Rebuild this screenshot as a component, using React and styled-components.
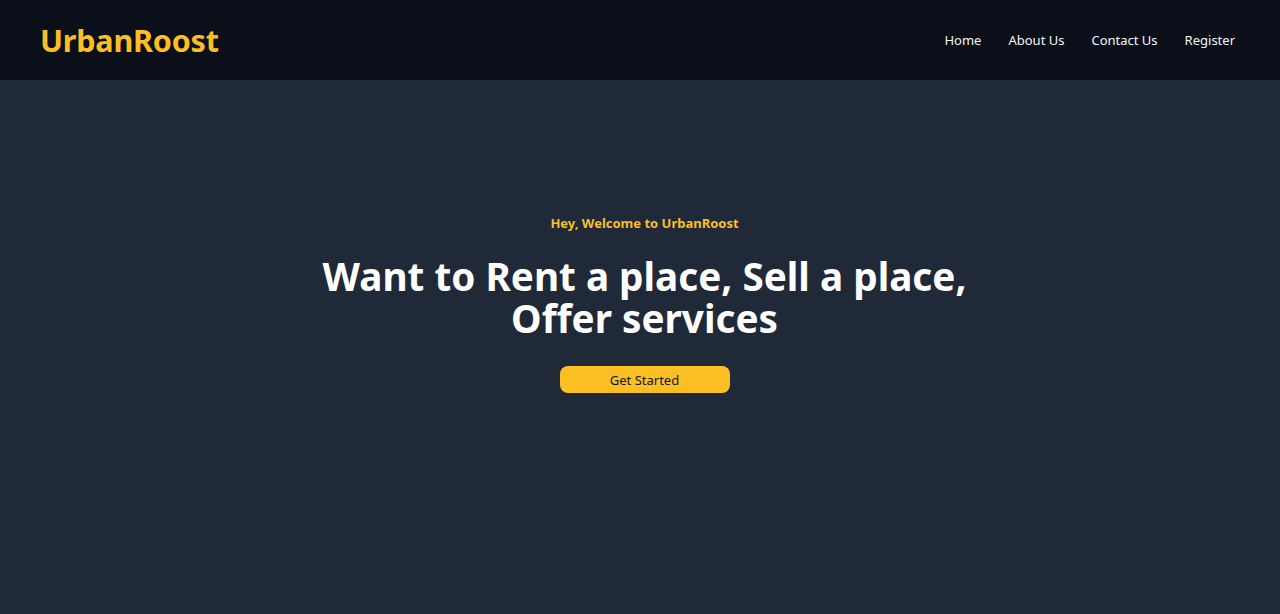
import React from "react";
import styled, { createGlobalStyle } from "styled-components";

const GlobalStyle = createGlobalStyle`
  html, body {
    margin: 0;
    padding: 0;
    background: #1f2937;
    font-family: "Noto Sans", "Open Sans", sans-serif;
  }
  * {
    box-sizing: border-box;
  }
`;

const Page = styled.div`
  min-height: 614px;
  display: flex;
  flex-direction: column;
  background: #1f2937;
`;

const Navbar = styled.nav`
  height: 80px;
  display: flex;
  align-items: center;
  justify-content: space-between;
  padding: 0 45px 0 40px;
  background: #0b0f19;
`;

const Logo = styled.div`
  color: #fbbf24;
  font-size: 30.5px;
  font-weight: 700;
  letter-spacing: -0.2px;
`;

const NavLinks = styled.ul`
  display: flex;
  gap: 27px;
  list-style: none;
  margin: 0;
  padding: 0;
`;

const NavLink = styled.li`
  color: #f3f4f6;
  font-size: 13px;
  cursor: pointer;
  margin-bottom: 1px;
`;

const Hero = styled.section`
  flex: 1;
  display: flex;
  flex-direction: column;
  align-items: center;
  padding: 134px 0 0 9px;
  text-align: center;
`;

const Greeting = styled.p`
  margin: 0;
  color: #fbbf24;
  font-size: 13px;
  font-weight: 700;
`;

const Heading = styled.h1`
  margin: 23px 0 0;
  color: #ffffff;
  font-size: 38.7px;
  font-weight: 700;
  line-height: 42px;
`;

const CtaButton = styled.button`
  margin-top: 27px;
  width: 170px;
  height: 27px;
  border: none;
  border-radius: 8px;
  background: #fbbf24;
  color: #111827;
  font-family: inherit;
  font-size: 13px;
  cursor: pointer;
`;

export default function App() {
  const links = ["Home", "About Us", "Contact Us", "Register"];
  return (
    <Page>
      <GlobalStyle />
      <Navbar>
        <Logo>UrbanRoost</Logo>
        <NavLinks>
          {links.map((l) => (
            <NavLink key={l}>{l}</NavLink>
          ))}
        </NavLinks>
      </Navbar>
      <Hero>
        <Greeting>Hey, Welcome to UrbanRoost</Greeting>
        <Heading>
          Want to Rent a place, Sell a place,
          <br />
          Offer services
        </Heading>
        <CtaButton>Get Started</CtaButton>
      </Hero>
    </Page>
  );
}
